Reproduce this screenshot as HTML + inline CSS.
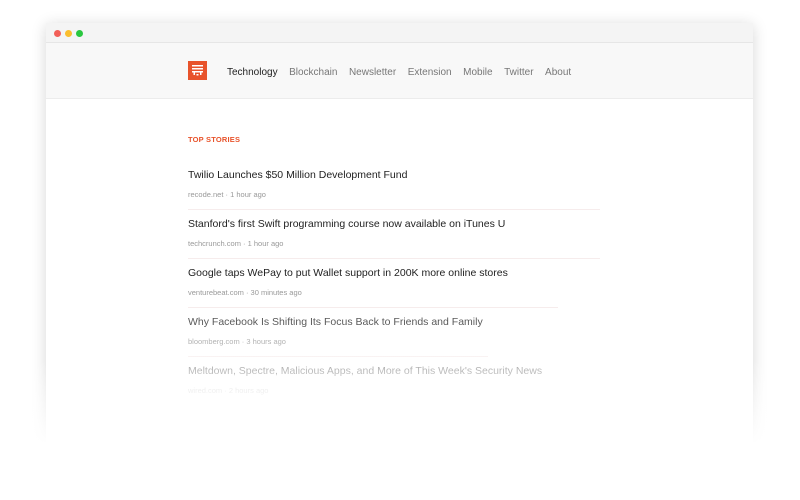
<!DOCTYPE html>
<html><head><meta charset="utf-8"><style>
*{margin:0;padding:0;box-sizing:border-box}
body{width:800px;height:500px;background:#fff;font-family:"Liberation Sans",sans-serif;position:relative;overflow:hidden}
.win{position:absolute;left:46px;top:23px;width:707px;height:470px;background:#fff;box-shadow:0 2px 14px rgba(0,0,0,.16);overflow:hidden}
.tb{height:20px;background:#f4f4f4;border-bottom:1px solid #e6e6e6;position:relative}
.d{position:absolute;top:7px;width:7px;height:7px;border-radius:50%}
.hd{height:56px;background:#f8f8f8;border-bottom:1px solid #ececec;position:relative}
.logo{position:absolute;left:142px;top:18px;width:19px;height:19px;background:#e8532b}
.nav{position:absolute;left:181px;top:24px;font-size:10px;color:#777}
.nav span{margin-right:11.5px}
.nav span.a{color:#222}
.ts{position:absolute;left:142px;top:112px;font-size:7.5px;font-weight:bold;color:#e8532b;letter-spacing:.2px}
.it{position:absolute;left:142px}
.t{font-size:10.5px;color:#222}
.m{font-size:7.5px;color:#999;margin-top:9px}
.sep{position:absolute;left:142px;height:1px;background:#f6ecec}
.fade{position:absolute;left:0;right:0;top:330px;height:100px;background:linear-gradient(rgba(255,255,255,0),#fff 80%)}
.pfade{position:absolute;left:0;top:360px;width:800px;height:140px;background:linear-gradient(rgba(255,255,255,0),#fff 60%)}
</style></head><body>
<div class="win">
<div class="tb"><div class="d" style="left:8px;background:#f25f58"></div><div class="d" style="left:19px;background:#fbbe2e"></div><div class="d" style="left:30px;background:#29c73f"></div></div>
<div class="hd"><div class="logo"><svg width="19" height="19" viewBox="0 0 19 19"><g fill="#fff"><rect x="4" y="4" width="11" height="1.5"/><rect x="4" y="7" width="11" height="1.5"/><rect x="4" y="10" width="11" height="1.5"/><rect x="5.5" y="10" width="1.5" height="4"/><rect x="12" y="10" width="1.5" height="4"/><rect x="8.5" y="13" width="2" height="1.5"/></g></svg></div>
<div class="nav"><span class="a">Technology</span><span>Blockchain</span><span>Newsletter</span><span>Extension</span><span>Mobile</span><span>Twitter</span><span>About</span></div></div>
<div class="ts">TOP STORIES</div>
<div class="it" style="top:146px"><div class="t">Twilio Launches $50 Million Development Fund</div><div class="m">recode.net · 1 hour ago</div></div>
<div class="sep" style="top:186px;width:412px"></div>
<div class="it" style="top:195px"><div class="t">Stanford's first Swift programming course now available on iTunes U</div><div class="m">techcrunch.com · 1 hour ago</div></div>
<div class="sep" style="top:235px;width:412px"></div>
<div class="it" style="top:244px"><div class="t">Google taps WePay to put Wallet support in 200K more online stores</div><div class="m">venturebeat.com · 30 minutes ago</div></div>
<div class="sep" style="top:284px;width:370px"></div>
<div class="it" style="top:293px;opacity:.75"><div class="t">Why Facebook Is Shifting Its Focus Back to Friends and Family</div><div class="m">bloomberg.com · 3 hours ago</div></div>
<div class="sep" style="top:333px;width:300px;opacity:.7"></div>
<div class="it" style="top:342px;opacity:.45"><div class="t">Meltdown, Spectre, Malicious Apps, and More of This Week's Security News</div><div class="m">wired.com · 2 hours ago</div></div>
<div class="fade"></div>
</div>
<div class="pfade"></div>
</body></html>
